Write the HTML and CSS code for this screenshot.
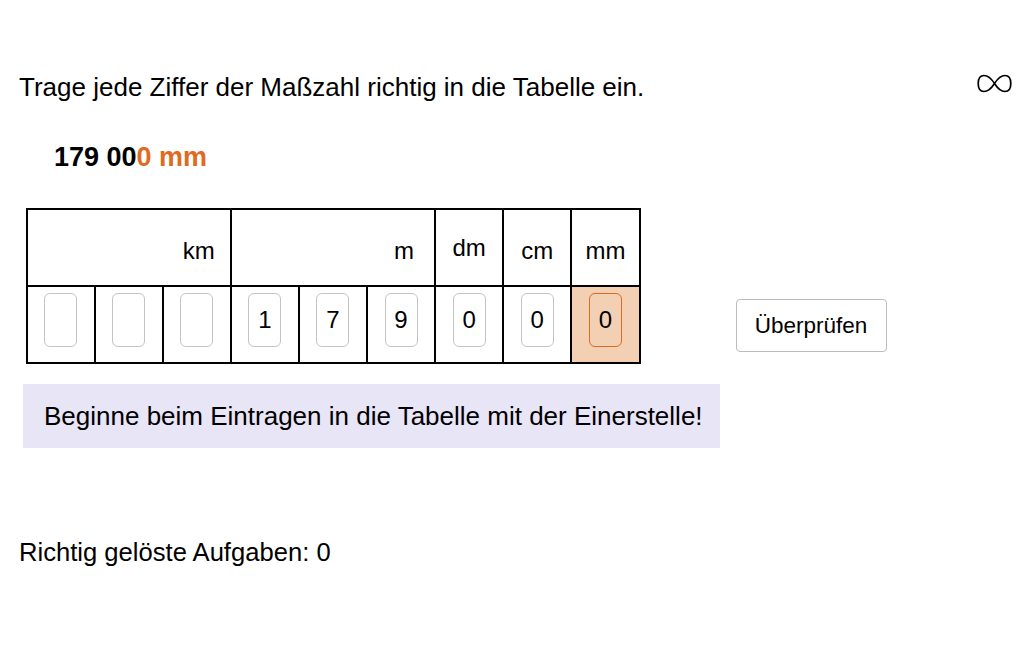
FILE: index.html
```html
<!DOCTYPE html>
<html lang="de">
<head>
    <meta charset="UTF-8">
    <title>Stellenwerttafel Längen</title>
    <link rel="stylesheet" href="styles.css">
</head>
<body>
    <div class="page">
        <div class="task-head">
            <p class="task">Trage jede Ziffer der Maßzahl richtig in die Tabelle ein.</p>
            <!-- endless mode -->
            <svg class="infinity" width="35" height="19" viewBox="0 0 35 19">
                <path d="M17.5 9.5 C14 4 10.5 1.5 7 1.5 C3.5 1.5 1.2 4.5 1.2 9.5 C1.2 14.5 3.5 17.5 7 17.5 C10.5 17.5 14 15 17.5 9.5 C21 4 24.5 1.5 28 1.5 C31.5 1.5 33.8 4.5 33.8 9.5 C33.8 14.5 31.5 17.5 28 17.5 C24.5 17.5 21 15 17.5 9.5 Z"
                      fill="none" stroke="#000" stroke-width="1.7"/>
            </svg>
        </div>

        <p class="measure">179 00<span class="hl">0 mm</span></p>

        <div class="work-row">
            <table class="place-table">
                <colgroup>
                    <col><col><col><col><col><col><col><col><col>
                </colgroup>
                <tr class="units">
                    <th colspan="3" class="right">km</th>
                    <th colspan="3" class="right m">m</th>
                    <th class="dm">dm</th>
                    <th>cm</th>
                    <th>mm</th>
                </tr>
                <tr class="digits">
                    <td><input type="text" maxlength="1" value=""></td>
                    <td><input type="text" maxlength="1" value=""></td>
                    <td><input type="text" maxlength="1" value=""></td>
                    <td><input type="text" maxlength="1" value="1"></td>
                    <td><input type="text" maxlength="1" value="7"></td>
                    <td><input type="text" maxlength="1" value="9"></td>
                    <td><input type="text" maxlength="1" value="0"></td>
                    <td><input type="text" maxlength="1" value="0"></td>
                    <td class="active"><input type="text" maxlength="1" value="0"></td>
                </tr>
            </table>
            <button class="check-btn">Überprüfen</button>
        </div>

        <div class="hint">Beginne beim Eintragen in die Tabelle mit der Einerstelle!</div>

        <p class="score">Richtig gelöste Aufgaben: 0</p>
    </div>
</body>
</html>
```

FILE: styles.css
```css
* {
    margin: 0;
    padding: 0;
    box-sizing: border-box;
}

body {
    font-family: 'Liberation Sans', Arial, sans-serif;
    background: #fff;
    color: #000;
}

.page {
    padding: 70px 20px 0 19px;
}

.task-head {
    display: flex;
    justify-content: space-between;
    align-items: center;
}

.task {
    font-size: 26px;
    line-height: 34px;
}

.infinity {
    display: block;
    margin: -8px 0 0 0;
}

.measure {
    margin: 38px 0 0 35px;
    font-size: 27px;
    font-weight: bold;
    line-height: 30px;
}

.measure .hl {
    color: #e06a1f;
}

.work-row {
    display: flex;
    align-items: flex-end;
    margin: 36px 0 0 6.5px;
}

.place-table {
    border-collapse: collapse;
    table-layout: fixed;
    width: 615px;
}

.place-table col {
    width: 68px;
}

.place-table th,
.place-table td {
    border: 2px solid #000;
    height: 77px;
    text-align: center;
}

.place-table td {
    padding-bottom: 10px;
}

.place-table th {
    font-size: 24px;
    font-weight: normal;
    padding-top: 6px;
}

.place-table th.dm {
    padding-top: 0;
}

.place-table th.right {
    text-align: right;
    padding-right: 15px;
}

.place-table th.m {
    padding-right: 20px;
}

.place-table input {
    width: 33px;
    height: 54px;
    border: 1px solid #c4c4c4;
    border-radius: 6px;
    background: #fff;
    font-family: 'Liberation Sans', Arial, sans-serif;
    font-size: 24px;
    text-align: center;
    color: #000;
    outline: none;
}

.place-table td.active {
    background: #f3cfb3;
}

.place-table td.active input {
    border-color: #e06a1f;
    background: #f3cfb3;
}

.check-btn {
    margin: 0 0 12px 95px;
    width: 151px;
    height: 53px;
    background: #fff;
    border: 1px solid #bcbcbc;
    border-radius: 4px;
    font-family: 'Liberation Sans', Arial, sans-serif;
    font-size: 22.5px;
    color: #000;
}

.hint {
    width: 697px;
    margin: 20px 0 0 4px;
    padding: 0 21px;
    height: 64px;
    line-height: 64px;
    background: #e8e5f7;
    font-size: 26px;
    white-space: nowrap;
}

.score {
    margin-top: 87px;
    font-size: 25.6px;
    line-height: 34px;
}
```
